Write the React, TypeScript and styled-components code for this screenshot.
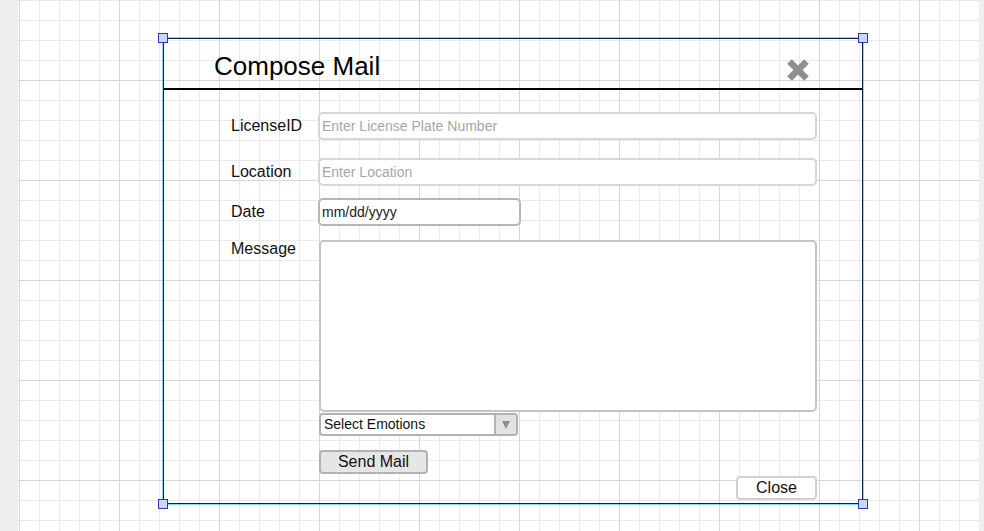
import React from "react";
import styled, { createGlobalStyle } from "styled-components";

const Global = createGlobalStyle`
  html, body { margin: 0; padding: 0; }
  body { font-family: "Liberation Sans", Arial, sans-serif; background: #efefef; }
  * { box-sizing: border-box; }
`;

const Page = styled.div`
  display: flex;
  width: 984px;
  height: 531px;
  overflow: hidden;
  background: #efefef;
`;

const Gutter = styled.div<{ $w: number }>`
  flex: 0 0 ${(p) => p.$w}px;
  background: #efefef;
`;

const Canvas = styled.div`
  flex: 1;
  height: 100%;
  padding: 38px 0 0 145px;
  background-color: #ffffff;
  background-image:
    linear-gradient(to right, #d6d6d6 1px, transparent 1px),
    linear-gradient(to bottom, #d6d6d6 1px, transparent 1px),
    linear-gradient(to right, #eaeaea 1px, transparent 1px),
    linear-gradient(to bottom, #eaeaea 1px, transparent 1px);
  background-size: 100px 100px, 100px 100px, 20px 20px, 20px 20px;
  background-position: 1px 0, 0 80px, 1px 0, 0 0;
`;

const Dialog = styled.div`
  position: relative;
  width: 700px;
  display: flex;
  flex-direction: column;
  border: 1px solid #05204a;
  box-shadow: 0 0 0 1px rgba(60, 190, 235, 0.6);
`;

const Handle = styled.div<{ $v: "top" | "bottom"; $h: "left" | "right" }>`
  position: absolute;
  ${(p) => p.$v}: -6px;
  ${(p) => p.$h}: -6px;
  width: 10px;
  height: 10px;
  background: #c6d9fc;
  border: 1px solid #3430bb;
`;

const Header = styled.div`
  height: 51px;
  display: flex;
  align-items: center;
  justify-content: space-between;
  padding: 0 52px 0 50px;
  border-bottom: 2px solid #000;
`;

const Title = styled.h1`
  margin: 0;
  font-size: 26px;
  font-weight: 400;
  color: #000;
  line-height: 30px;
  padding-top: 4px;
`;

const CloseIcon = styled.svg`
  width: 24px;
  height: 24px;
  margin-top: 12px;
  display: block;
`;

const Body = styled.div`
  display: flex;
  flex-direction: column;
  padding: 22px 45px 3px 67px;
`;

const Row = styled.div<{ $gap: number; $top?: boolean }>`
  display: grid;
  grid-template-columns: 87px 1fr;
  align-items: ${(p) => (p.$top ? "start" : "center")};
  margin-top: ${(p) => p.$gap}px;
`;

const Label = styled.label`
  font-size: 16px;
  color: #111;
  line-height: 18px;
  white-space: nowrap;
`;

const TextInput = styled.input<{ $w?: number; $border: string }>`
  width: ${(p) => (p.$w ? `${p.$w}px` : "100%")};
  height: 28px;
  border: 2px solid ${(p) => p.$border};
  border-radius: 5px;
  padding: 0 2px;
  font-family: "Liberation Sans", Arial, sans-serif;
  font-size: 14px;
  color: #1a1a1a;
  background: #fff;
  outline: none;
  &::placeholder { color: #a6a6a6; }
`;

const MessageArea = styled.textarea`
  margin-left: 1px;
  width: calc(100% - 1px);
  height: 172px;
  border: 2px solid #c4c4c4;
  border-radius: 5px;
  resize: none;
  background: #fff;
  outline: none;
`;

const SelectBox = styled.div`
  margin-left: 1px;
  width: 199px;
  height: 23px;
  display: flex;
  border: 2px solid #b2b2b2;
  border-radius: 4px;
  background: #fff;
  overflow: hidden;
`;

const SelectText = styled.span`
  flex: 1;
  font-size: 14px;
  color: #111;
  line-height: 19px;
  padding-left: 3px;
`;

const ArrowBox = styled.span`
  width: 22px;
  display: flex;
  align-items: center;
  justify-content: center;
  background: #e2e2e2;
  border-left: 2px solid #b2b2b2;
`;

const Triangle = styled.span`
  width: 0;
  height: 0;
  border-left: 4.5px solid transparent;
  border-right: 4.5px solid transparent;
  border-top: 8px solid #8e8e8e;
`;

const Button = styled.button<{ $w: number; $bg: string; $border: string }>`
  width: ${(p) => p.$w}px;
  height: 24px;
  padding: 0;
  border: 2px solid ${(p) => p.$border};
  border-radius: 4px;
  background: ${(p) => p.$bg};
  font-family: "Liberation Sans", Arial, sans-serif;
  font-size: 16px;
  color: #111;
  line-height: 20px;
  cursor: pointer;
`;

const SendButton = styled(Button)`
  margin-left: 1px;
`;

const Footer = styled.div`
  display: flex;
  justify-content: flex-end;
  margin-top: 2px;
`;

export default function App() {
  return (
    <>
      <Global />
      <Page>
        <Gutter $w={18} />
        <Canvas>
          <Dialog>
            <Handle $v="top" $h="left" />
            <Handle $v="top" $h="right" />
            <Handle $v="bottom" $h="left" />
            <Handle $v="bottom" $h="right" />
            <Header>
              <Title>Compose Mail</Title>
              <CloseIcon viewBox="0 0 24 24" aria-label="close">
                <line x1="3.5" y1="3.5" x2="20.5" y2="20.5" stroke="#8f8f8f" strokeWidth="6.5" />
                <line x1="20.5" y1="3.5" x2="3.5" y2="20.5" stroke="#8f8f8f" strokeWidth="6.5" />
              </CloseIcon>
            </Header>
            <Body>
              <Row $gap={0}>
                <Label>LicenseID</Label>
                <TextInput $border="#d6d6d6" placeholder="Enter License Plate Number" />
              </Row>
              <Row $gap={18}>
                <Label>Location</Label>
                <TextInput $border="#d6d6d6" placeholder="Enter Location" />
              </Row>
              <Row $gap={12}>
                <Label>Date</Label>
                <TextInput $border="#b6b6b6" $w={203} defaultValue="mm/dd/yyyy" />
              </Row>
              <Row $gap={14} $top>
                <Label>Message</Label>
                <MessageArea />
              </Row>
              <Row $gap={1}>
                <span />
                <SelectBox>
                  <SelectText>Select Emotions</SelectText>
                  <ArrowBox>
                    <Triangle />
                  </ArrowBox>
                </SelectBox>
              </Row>
              <Row $gap={14}>
                <span />
                <SendButton $w={109} $bg="#e6e6e6" $border="#b2b2b2">
                  Send Mail
                </SendButton>
              </Row>
              <Footer>
                <Button $w={81} $bg="#ffffff" $border="#d0d0d0">
                  Close
                </Button>
              </Footer>
            </Body>
          </Dialog>
        </Canvas>
        <Gutter $w={5} />
      </Page>
    </>
  );
}
